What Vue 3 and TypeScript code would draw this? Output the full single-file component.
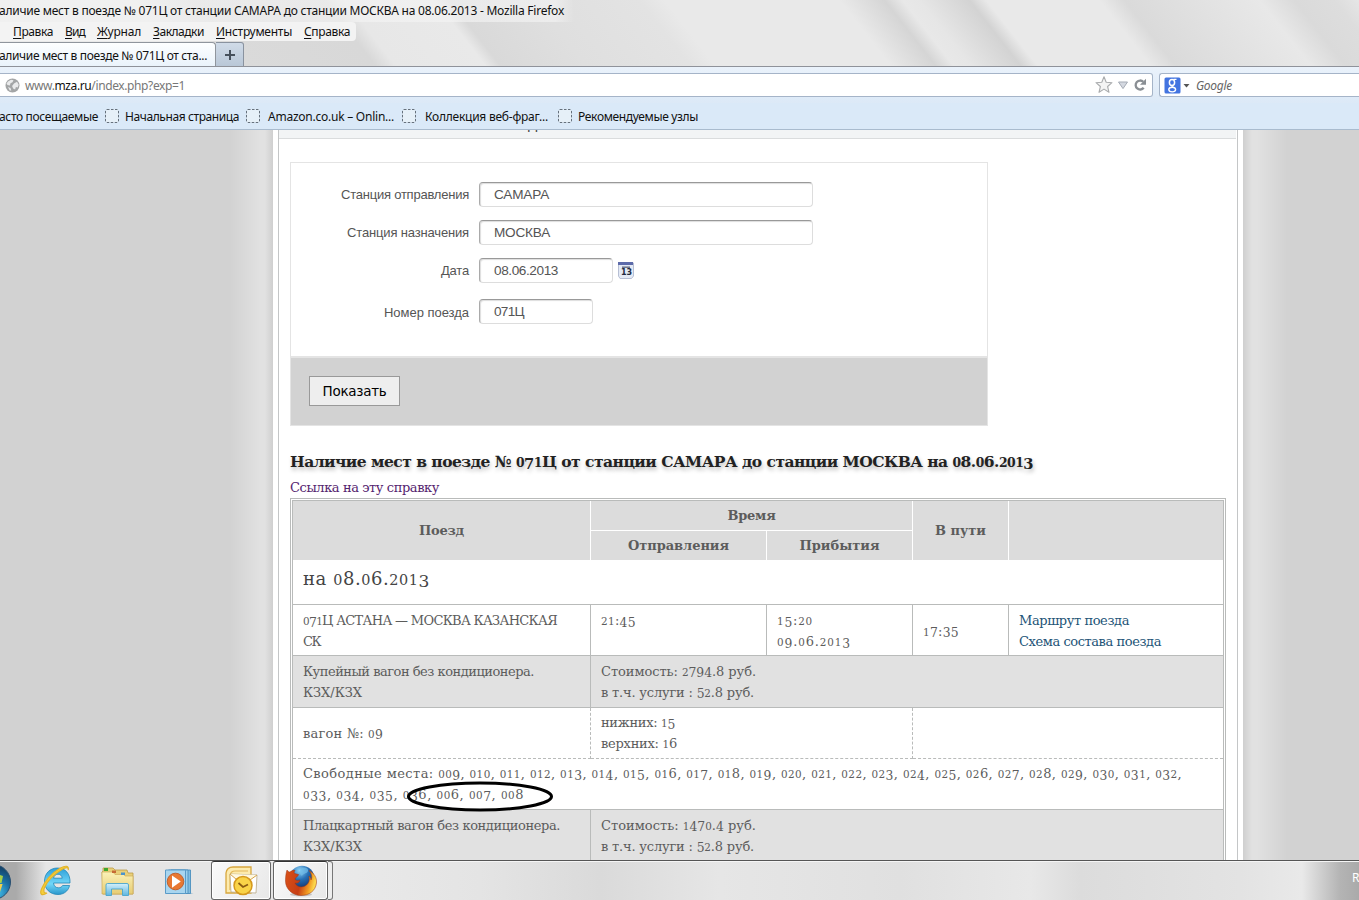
<script setup lang="ts">
import { h, type FunctionalComponent, type ObjectDirective } from 'vue'

// Distributes letter spacing so that a label takes a given width.
const vFit: ObjectDirective<HTMLElement, number> = {
  mounted(el, binding) {
    const count = (el.textContent || '').length
    if (!count) return
    const width = el.getBoundingClientRect().width
    el.style.letterSpacing = `${(binding.value - width) / count}px`
  },
}

// Serif text with old-style figures: 0-2 at x-height, 3 4 5 7 9 descending.
const Fig: FunctionalComponent<{ text: string }> = (props) =>
  h(
    'span',
    { class: 'fig' },
    (props.text.match(/[0-2]+|[34579]+|[^0-234579]+/g) || []).map((part) => {
      if (/^[0-2]/.test(part)) return h('span', { class: 'fig-small' }, part)
      if (/^[34579]/.test(part)) return h('span', { class: 'fig-low' }, part)
      return part
    }),
  )
Fig.props = ['text']

const menus = [
  { text: 'Правка', w: 40 },
  { text: 'Вид', w: 20 },
  { text: 'Журнал', w: 44 },
  { text: 'Закладки', w: 51 },
  { text: 'Инструменты', w: 76 },
  { text: 'Справка', w: 46 },
]
const bookmarks = [
  { text: 'Начальная страница', w: 114, cls: 'b1' },
  { text: 'Amazon.co.uk – Onlin...', w: 126, cls: 'b2' },
  { text: 'Коллекция веб-фраг...', w: 123, cls: 'b3' },
  { text: 'Рекомендуемые узлы', w: 120, cls: 'b4' },
]
const fields = [
  { label: 'Станция отправления', lw: 128, value: 'САМАРА', vw: 55, cls: 'wide' },
  { label: 'Станция назначения', lw: 122, value: 'МОСКВА', vw: 56, cls: 'wide' },
  { label: 'Дата', lw: 28, value: '08.06.2013', vw: 64, cls: 'date' },
  { label: 'Номер поезда', lw: 85, value: '071Ц', vw: 30, cls: 'train' },
]
const seats1 =
  'Свободные места: 009, 010, 011, 012, 013, 014, 015, 016, 017, 018, 019, 020, 021, 022, 023, 024, 025, 026, 027, 028, 029, 030, 031, 032,'
const seats2 = '033, 034, 035, 036, 006, 007, 008'
</script>

<template>
  <div class="screen">
    <header class="glass">
      <div class="streaks"></div>
      <div class="title"><span v-fit="565">аличие мест в поезде № 071Ц от станции САМАРА до станции МОСКВА на 08.06.2013 - Mozilla Firefox</span></div>
      <nav class="menu">
        <span v-for="m in menus" :key="m.text" v-fit="m.w"><u>{{ m.text[0] }}</u>{{ m.text.slice(1) }}</span>
      </nav>
      <div class="tabs">
        <div class="tab"><span v-fit="208">аличие мест в поезде № 071Ц от ста...</span></div>
        <div class="newtab">
          <svg width="12" height="12" viewBox="0 0 12 12"><path d="M6 1v10M1 6h10" stroke="#46505c" stroke-width="2" /></svg>
        </div>
      </div>
    </header>

    <div class="toolbar">
      <div class="url">
        <svg class="globe" width="15" height="15" viewBox="0 0 15 15">
          <circle cx="7.5" cy="7.5" r="7" fill="#a3a5a6" />
          <path d="M3 3.5l3-1.8 2.5.6-1 2-2 1-.6 2.2-2.4-.5-1-1.5zM9 5.5l3-1.7 1.7 3-1 2.6-1.8-.4-.8 2.6-2-1-1-2.6zM3 9l2.5 1 .8 2.6-1.6-.2z" fill="#e9eaeb" />
        </svg>
        <span class="address" v-fit="160">www.<b>mza.ru</b>/index.php?exp=1</span>
        <svg class="urlicons" width="54" height="20" viewBox="0 0 54 20">
          <path d="M9 1.8l2.2 5.5 5.8.4-4.4 3.8 1.4 5.8L9 14.1l-5 3.2 1.4-5.8L1 7.7l5.8-.4z" fill="#f4f4f4" stroke="#a9abad" stroke-width="1.1" stroke-linejoin="round" />
          <path d="M23.5 7h9L28 13.6z" fill="#d4d8e0" stroke="#a5abb5" stroke-width="1" />
          <path d="M48.7 12.8a4.5 4.5 0 1 1-.4-6" fill="none" stroke="#8a8f94" stroke-width="2.3" />
          <path d="M51 3.800v6h-6z" fill="#8a8f94" />
        </svg>
      </div>
      <div class="search">
        <svg width="29" height="17" viewBox="0 0 29 17">
          <rect x=".5" y=".5" width="16" height="16" rx="1.5" fill="#4374e0" />
          <ellipse cx="8" cy="5.4" rx="2.6" ry="3" fill="none" stroke="#fff" stroke-width="1.5" />
          <path d="M9.5 2.3h3M9 8.2c-2 1-1 1.6.7 2.2" fill="none" stroke="#fff" stroke-width="1.2" />
          <ellipse cx="8.2" cy="12.6" rx="3.4" ry="2.3" fill="none" stroke="#fff" stroke-width="1.4" />
          <path d="M19.500 7h6L22.500 10.500z" fill="#555" />
        </svg>
        <i v-fit="36">Google</i>
      </div>
    </div>

    <div class="bookmarks">
      <span v-fit="99">асто посещаемые</span>
      <div v-for="b in bookmarks" :key="b.text" class="bm" :class="b.cls">
        <svg width="14" height="14" viewBox="0 0 14 14"><rect x=".5" y=".5" width="13" height="13" rx="1.5" fill="#e6f0f8" stroke="#66717c" stroke-dasharray="2.5 1.5" /></svg>
        <span v-fit="b.w">{{ b.text }}</span>
      </div>
    </div>

    <main class="viewport">
      <div class="side left"></div>
      <div class="sheet">
        <div class="inner">
          <div class="strip"><span>д</span></div>
          <form class="form" @submit.prevent>
            <div v-for="f in fields" :key="f.label" class="row" :class="f.cls">
              <label><span v-fit="f.lw">{{ f.label }}</span></label>
              <div class="input"><span v-fit="f.vw">{{ f.value }}</span></div>
              <svg v-if="f.cls === 'date'" class="cal" width="16" height="17" viewBox="0 0 16 17">
                <path d="M.5 1h15v13l-2 2.500H2L.5 14z" fill="#e4eaf5" stroke="#b7bfd4" />
                <path d="M0 0h15v3H0z" fill="#5d6baa" />
                <path d="M4 5.200h8" stroke="#6b7186" stroke-width="1.5" />
                <text x="8.5" y="13" text-anchor="middle" class="calnum">13</text>
              </svg>
            </div>
            <div class="actions"><button type="button"><span v-fit="64">Показать</span></button></div>
          </form>

          <h2><Fig v-fit="743" text="Наличие мест в поезде № 071Ц от станции САМАРА до станции МОСКВА на 08.06.2013" /></h2>
          <div class="ref"><a v-fit="149">Ссылка на эту справку</a></div>

          <div class="tablewrap">
            <table>
              <colgroup><col class="c1" /><col class="c2" /><col class="c3" /><col class="c4" /><col class="c5" /></colgroup>
              <tbody>
                <tr class="h1">
                  <th rowspan="2"><span v-fit="45">Поезд</span></th>
                  <th colspan="2" class="under"><span v-fit="48">Время</span></th>
                  <th rowspan="2"><span v-fit="51">В пути</span></th>
                  <th rowspan="2" class="last"></th>
                </tr>
                <tr class="h2"><th><span v-fit="101">Отправления</span></th><th><span v-fit="80">Прибытия</span></th></tr>
                <tr class="day"><td colspan="5" class="last"><Fig v-fit="127" text="на 08.06.2013" /></td></tr>
                <tr class="r51 top">
                  <td><Fig v-fit="254" text="071Ц АСТАНА — МОСКВА КАЗАНСКАЯ" /><br /><span v-fit="17">СК</span></td>
                  <td><Fig v-fit="35" text="21:45" /></td>
                  <td><Fig v-fit="36" text="15:20" /><br /><Fig v-fit="74" text="09.06.2013" /></td>
                  <td class="mid"><Fig v-fit="36" text="17:35" /></td>
                  <td class="last"><a class="blue" v-fit="110">Маршрут поезда</a><br /><a class="blue" v-fit="142">Схема состава поезда</a></td>
                </tr>
                <tr class="r52 shade">
                  <td><span v-fit="231">Купейный вагон без кондиционера.</span><br /><span v-fit="59">КЗХ/КЗХ</span></td>
                  <td colspan="4" class="last"><Fig v-fit="155" text="Стоимость: 2794.8 руб." /><br /><Fig v-fit="153" text="в т.ч. услуги : 52.8 руб." /></td>
                </tr>
                <tr class="r51 dashed">
                  <td><Fig v-fit="80" text="вагон №: 09" /></td>
                  <td colspan="2"><Fig v-fit="74" text="нижних: 15" /><br /><Fig v-fit="76" text="верхних: 16" /></td>
                  <td colspan="2" class="last"></td>
                </tr>
                <tr class="r51">
                  <td colspan="5" class="last"><Fig v-fit="879" :text="seats1" /><br /><Fig v-fit="221" :text="seats2" /></td>
                </tr>
                <tr class="r52 shade">
                  <td><span v-fit="257">Плацкартный вагон без кондиционера.</span><br /><span v-fit="59">КЗХ/КЗХ</span></td>
                  <td colspan="4" class="last"><Fig v-fit="155" text="Стоимость: 1470.4 руб." /><br /><Fig v-fit="153" text="в т.ч. услуги : 52.8 руб." /></td>
                </tr>
              </tbody>
            </table>
            <svg class="mark" width="148" height="31" viewBox="0 0 148 31"><ellipse cx="74" cy="15.500" rx="71.500" ry="13.500" fill="none" stroke="#000" stroke-width="3" /></svg>
          </div>
        </div>
      </div>
      <div class="side right"></div>
    </main>

    <footer class="taskbar">
      <svg class="icons" width="211" height="39" viewBox="0 0 211 39">
        <defs>
          <radialGradient id="orb" cx=".6" cy=".8" r=".8"><stop offset="0" stop-color="#45c4ee" /><stop offset=".5" stop-color="#1b6da1" /><stop offset="1" stop-color="#12395c" /></radialGradient>
          <linearGradient id="ie" x1="0" y1="0" x2="0" y2="1"><stop offset="0" stop-color="#2e9fd8" /><stop offset=".6" stop-color="#72d7f8" /><stop offset="1" stop-color="#2a97cc" /></linearGradient>
          <linearGradient id="folder" x1="0" y1="0" x2="0" y2="1"><stop offset="0" stop-color="#fbf2b8" /><stop offset="1" stop-color="#e7cc73" /></linearGradient>
          <linearGradient id="stand" x1="0" y1="0" x2="0" y2="1"><stop offset="0" stop-color="#d3effa" /><stop offset="1" stop-color="#5fb6df" /></linearGradient>
        </defs>
        <circle cx="-7" cy="21" r="17.5" fill="url(#orb)" stroke="#294f70" />
        <path d="M0 14l3 1-1.500 7H0z" fill="#a8cf48" /><path d="M0 23h2.600L0 31z" fill="#f4d04c" />
        <path d="M68.500 27.500c-2 3.500-5.500 6-10.500 6-8 0-13.500-5.500-13.500-13.300S50 7 57.500 7C65.500 7 70.500 12.800 70 22H53.500c.3 3.200 2.200 4.800 5 4.800 2 0 3.300-.8 4.100-2.300h7zM53.600 17.200h8.600c-.3-2.700-1.900-4-4.200-4-2.400 0-4 1.400-4.400 4z" fill="url(#ie)" stroke="#2286b8" stroke-width=".8" fill-rule="evenodd" />
        <path d="M47 32c-5.500 3.500-7.500 1-5.500-4C44 21 51.500 12 60 7.300c6-3.300 9-2.600 8.300 1.700.7-3-2.300-3-6.800-.3C54 13 46.500 21 44.300 27c-1.300 3.700-.3 5.500 2.700 5z" fill="#f6cf3a" stroke="#e3b52c" stroke-width="1.200" />
        <path d="M103 7h10l2 2h12l1 3h5v21h-30l-1-22 1-1z" fill="#e9cf78" stroke="#bd9d48" stroke-width=".8" />
        <path d="M102 11h11l2 2.500h9l1 1.500h8v18h-31z" fill="url(#folder)" stroke="#cdae59" stroke-width=".7" />
        <path d="M104 7h4v3h-4z" fill="#3fa72f" /><path d="M112 9.500h4V12h-4z" fill="#c66a35" /><path d="M121 11.500h4V14h-4z" fill="#4b94cc" />
        <path d="M106 24q0-1.500 1.500-1.500h19.500q1.500 0 1.500 1.500v10.500h-6V28h-11v6.500h-5.500z" fill="url(#stand)" stroke="#4aa5cd" stroke-width=".9" />
        <path d="M175 33h18.500l-3-1.500z" fill="#9ab8cc" opacity=".7" />
        <path d="M171 9h19.500v23.500h-19.500z" fill="#82bde1" stroke="#4b8ebe" stroke-width=".9" />
        <path d="M168.500 9h19.500v23.500h-19.500z" fill="#9dd0ec" stroke="#4b8ebe" stroke-width=".9" />
        <path d="M165.500 9h20v23.500h-20z" fill="#a8d5ef" stroke="#5a9bc8" stroke-width="1" />
        <circle cx="175.500" cy="20.500" r="8.300" fill="#e87832" stroke="#bf612f" /><path d="M172 14.500l8.800 6-8.800 6.200z" fill="#fff" />
      </svg>
      <div class="task outlook">
        <svg width="36" height="32" viewBox="0 0 36 32">
          <path d="M3 28V8q1-6 7-6h18v26z" fill="#fdebae" stroke="#d8a73e" stroke-width="1.300" />
          <path d="M7 25V10q1-4 5-4h13" fill="none" stroke="#e3b859" stroke-width="1.200" />
          <path d="M7 9l27 1-1 18-25-1z" fill="#fff" stroke="#b7a886" stroke-width=".8" /><path d="M7 9l13 11L34 10" fill="#fff8df" stroke="#d6a44b" />
          <circle cx="20" cy="20.500" r="9" fill="#f9d348" stroke="#d5981d" stroke-width="1.500" /><path d="M15.500 18l4.500 4 5-2.500" fill="none" stroke="#8a5a12" stroke-width="1.700" />
        </svg>
      </div>
      <div class="task firefox">
        <svg width="34" height="32" viewBox="0 0 34 32">
          <defs>
            <radialGradient id="world" cx=".4" cy=".2" r=".8"><stop offset="0" stop-color="#8fd3f5" /><stop offset=".45" stop-color="#2870b5" /><stop offset="1" stop-color="#102b65" /></radialGradient>
            <linearGradient id="fox" x1="0" y1="0" x2="1" y2=".2"><stop offset="0" stop-color="#d95219" /><stop offset=".55" stop-color="#c73d14" /><stop offset=".85" stop-color="#f29b22" /><stop offset="1" stop-color="#fbd64c" /></linearGradient>
          </defs>
          <ellipse cx="17" cy="29.500" rx="11" ry="1.800" fill="#999" opacity=".5" />
          <circle cx="18" cy="13" r="12.300" fill="url(#world)" />
          <path d="M18 3c4-1 7 1 6 3-1 3-5 2-6 5-2-2-4-4 0-8z" fill="#74bde8" opacity=".7" />
          <path d="M3 5c1 1.500 2 2 3 2 1.500-1.500 4-2 5-1.500-1 1-1 2-.5 3l4 1c0 2-3 2.500-3.500 4.500 0 1.500 3 2 5 1-.5 3-3 3.500-5 3 2 4.500 8 5 11.500 2 2.500-2 3.500-5 2.500-9 1 1 2 2.500 2 4 1.500-3 .5-6.500-2-9.500 5 2.500 8 7 7.500 12.500C31.500 26 25 30.500 17 30.500 8.500 30.500 1.500 24 1.500 16 1.500 11.500 2 8 3 5z" fill="url(#fox)" stroke="#9f3413" stroke-width=".5" />
        </svg>
      </div>
      <div class="stack"></div>
      <div class="tray">R</div>
    </footer>
  </div>
</template>

<style>
html, body { margin: 0; overflow: hidden; }
.fig-small { font-size: 0.8em; line-height: 1; }
.fig-low { position: relative; top: 0.15em; font-size: 0.95em; line-height: 1; }
</style>

<style scoped>
.screen { width: 1359px; height: 900px; overflow: hidden; display: flex; flex-direction: column; font-family: 'Noto Sans', 'Open Sans', sans-serif; font-size: 12px; color: #111; background: #d2d2d2; white-space: nowrap; }
.screen * { box-sizing: border-box; }
span, a { display: inline-block; }
.screen :deep(.fig) { display: inline-block; }
.glass { height: 67px; position: relative; overflow: hidden; border-bottom: 1px solid #8f929a; background: #e8e8e8; flex: none; }
.streaks { position: absolute; inset: 0 -80px; transform: skewX(38deg); background: linear-gradient(90deg, #e9e9e9 0, #e9e9e9 240px, #dadada 300px, #d8d8d8 430px, #e7e7e7 450px, #e9e9e9 540px, #d9d9d9 555px, #dfdfdf 640px, #e3e3e3 745px, #e9e9e9 770px, #e9e9e9 945px, #d5d5d5 990px, #e8e8e8 1008px, #e6e6e6 1025px, #d3d3d3 1075px, #e9e9e9 1092px, #e9e9e9 1205px, #dadada 1230px, #e8e8e8 1365px, #dadada 1400px, #dddddd 1440px, #ebebeb 1480px); }
.title { position: relative; height: 22px; padding-top: 1px; line-height: 20px; width: 574px; background: linear-gradient(90deg, #f4f4f4a0 0 555px, transparent); }
.title > span { margin-left: -1px; }
.menu { position: relative; display: flex; gap: 12px; padding-left: 13px; width: 356px; height: 19px; line-height: 20px; background: #f3f3f3; border-radius: 0 4px 4px 0; }
.menu u { text-underline-offset: 2px; }
.tabs { position: relative; display: flex; height: 26px; padding-top: 1px; }
.tab { width: 216px; border: 1px solid #8f959d; border-width: 1px 1px 0 0; border-radius: 0 4px 0 0; background: linear-gradient(#fdfeff, #e9f2fb); line-height: 26px; }
.tab > span { margin-left: -1px; }
.newtab { width: 28px; height: 25px; border: 1px solid #89929f; border-left: 0; border-radius: 0 3px 0 0; background: linear-gradient(#d0dbe8, #b9c7d7); display: flex; align-items: center; justify-content: center; }
.toolbar { height: 36px; flex: none; padding-top: 6px; display: flex; gap: 6px; background: linear-gradient(#eaf2fb, #dce9f7); }
.url { width: 1153px; height: 24px; display: flex; align-items: center; background: #fff; border: 1px solid #a5b4c8; border-left: 0; border-radius: 0 3px 3px 0; color: #777; padding-left: 5px; }
.globe { margin-right: 5px; }
.address b { font-weight: 400; color: #111; }
.urlicons { margin-left: auto; margin-right: 3px; }
.search { flex: 1; height: 24px; display: flex; align-items: center; background: #fff; border: 1px solid #a5b4c8; border-right: 0; border-radius: 3px 0 0 3px; padding-left: 4px; color: #666; }
.search i { display: inline-block; margin-left: 3px; }
.bookmarks { height: 27px; flex: none; display: flex; align-items: center; background: #dae9f8; border-bottom: 1px solid #a9bbce; }
.bookmarks > span { margin-left: -1px; }
.bm { display: flex; align-items: center; }
.b1 { margin-left: 7px; gap: 6px; }
.b2 { margin-left: 7px; gap: 8px; }
.b3 { margin-left: 8px; gap: 9px; }
.b4 { margin-left: 10px; gap: 6px; }
.viewport { height: 730px; flex: none; display: flex; overflow: hidden; }
.left { width: 273px; background: linear-gradient(90deg, #d2d2d2 0 230px, #e1e1e1 260px, #e1e1e1 265px, #cfcfcf); }
.right { flex: 1; background: linear-gradient(90deg, #cfcfcf, #e1e1e1 9px, #e1e1e1 14px, #d2d2d2 44px); }
.sheet { width: 970px; background: #fff; padding: 0 5px; }
.inner { width: 960px; height: 730px; border: 1px solid #c4c6c7; border-width: 0 1px; padding-left: 11px; }
.strip { height: 9px; margin: 0 1px 0 -11px; background: #f2f4f5; border-bottom: 1px solid #dadcdd; overflow: hidden; }
.strip span { display: block; font: 16px/16px 'Liberation Sans', sans-serif; color: #444; margin: -14px 0 0 249px; }
.form { margin-top: 23px; width: 698px; height: 264px; border: 1px solid #e4e4e4; padding-top: 19px; display: flex; flex-direction: column; font-family: 'Liberation Sans', sans-serif; font-size: 13px; color: #555; }
.row { display: flex; height: 25px; margin-bottom: 13px; align-items: center; }
.row label { width: 178px; margin-right: 10px; text-align: right; }
.train label { padding-top: 1px; }
.input { height: 25px; border: 1px solid #ddd; border-top-color: #999; border-left-color: #aaa; border-radius: 4px; background: #fff; box-shadow: inset 1px 1px 1px #ddd; padding: 0 0 0 14px; line-height: 24px; font-size: 13.6px; }
.wide .input { width: 334px; }
.date .input { width: 134px; }
.train .input { width: 114px; }
.date { margin-bottom: 16px; }
.cal { margin: -1px 0 0 5px; }
.calnum { font: bold 8px 'DejaVu Sans', sans-serif; fill: #222b40; }
.actions { margin-top: auto; height: 69px; flex: none; background: #d2d2d2; border-top: 2px solid #e4e4e4; padding: 18px 0 0 18px; }
button { width: 91px; height: 30px; padding: 0; border: 1px solid #999; background: #eee; color: #000; font: 13.5px 'DejaVu Sans', sans-serif; display: block; }
h2 { margin: 23px 0 0; height: 26px; font: bold 15.5px/26px 'DejaVu Serif', serif; color: #222; text-shadow: 1px 3px 4px #bbb; }
.ref { height: 23px; line-height: 26px; font-family: 'DejaVu Serif', serif; font-size: 13px; color: #55246f; }
.ref a { display: block; width: max-content; }
.tablewrap { position: relative; width: 936px; border: 3px double #b9bbba; }
.mark { position: absolute; left: 113px; top: 280px; }
table { width: 930px; table-layout: fixed; border-spacing: 0; border-collapse: separate; font-family: 'DejaVu Serif', serif; font-size: 13px; line-height: 21px; color: #5c5c5c; }
.c1 { width: 298px; } .c2 { width: 176px; } .c3 { width: 146px; } .c4 { width: 96px; } .c5 { width: 214px; }
th, td { padding: 0 10px; border-right: 1px solid #b9bbba; border-bottom: 1px solid #b9bbba; text-align: left; vertical-align: middle; }
td > span, td > a { vertical-align: top; height: 21px; }
th { text-align: center; background: #dcdcdc; border-color: #fff; border-bottom: 0; }
th.under { border-bottom: 1px solid #fff; }
.last { border-right: 0; }
.h1 { height: 30px; } .h2 { height: 29px; } .day { height: 45px; } .r51 { height: 51px; } .r52 { height: 52px; }
.day td { font-size: 18px; padding-bottom: 7px; color: #444; }
.day td > span { line-height: 24px; height: 24px; }
.top td { vertical-align: top; padding-top: 5px; }
.top td.mid { vertical-align: middle; padding-top: 2px; }
.shade td { background: #e1e1e1; }
.dashed td { border-style: dashed; border-width: 0 1px 1px 0; }
.dashed td.last { border-right-width: 0; }
.blue { color: #235477; }
.taskbar { height: 41px; flex: none; display: flex; border-top: 1px solid #555; background: linear-gradient(90deg, #aaa 0 16px, #e5e5e5 46px, #e5e5e5 330px, #eaeaea 332px, #e4e4e4 480px, #dadada 600px, #e6e6e6 720px, #e0e0e0 900px, #e8e8e8 1030px, #dcdcdc 1080px, #e3e3e3 1240px, #e9e9e9 1302px, #b4b4b4 1340px, #aaa); box-shadow: inset 0 1px #f5f5f5; }
.task { height: 39px; display: flex; align-items: center; justify-content: center; border: 1px solid #666; border-top-color: #333; border-radius: 3px; background: linear-gradient(120deg, #fafafa, #e8e8e8); box-shadow: inset 0 0 0 1px #fff; }
.outlook { width: 60px; } .firefox { width: 55px; margin-left: 2px; }
.stack { width: 5px; height: 39px; border: 1px solid #777; border-left: 0; border-radius: 0 3px 3px 0; background: #eee; }
.tray { margin-left: auto; width: 7px; line-height: 34px; color: #fff; }
</style>
